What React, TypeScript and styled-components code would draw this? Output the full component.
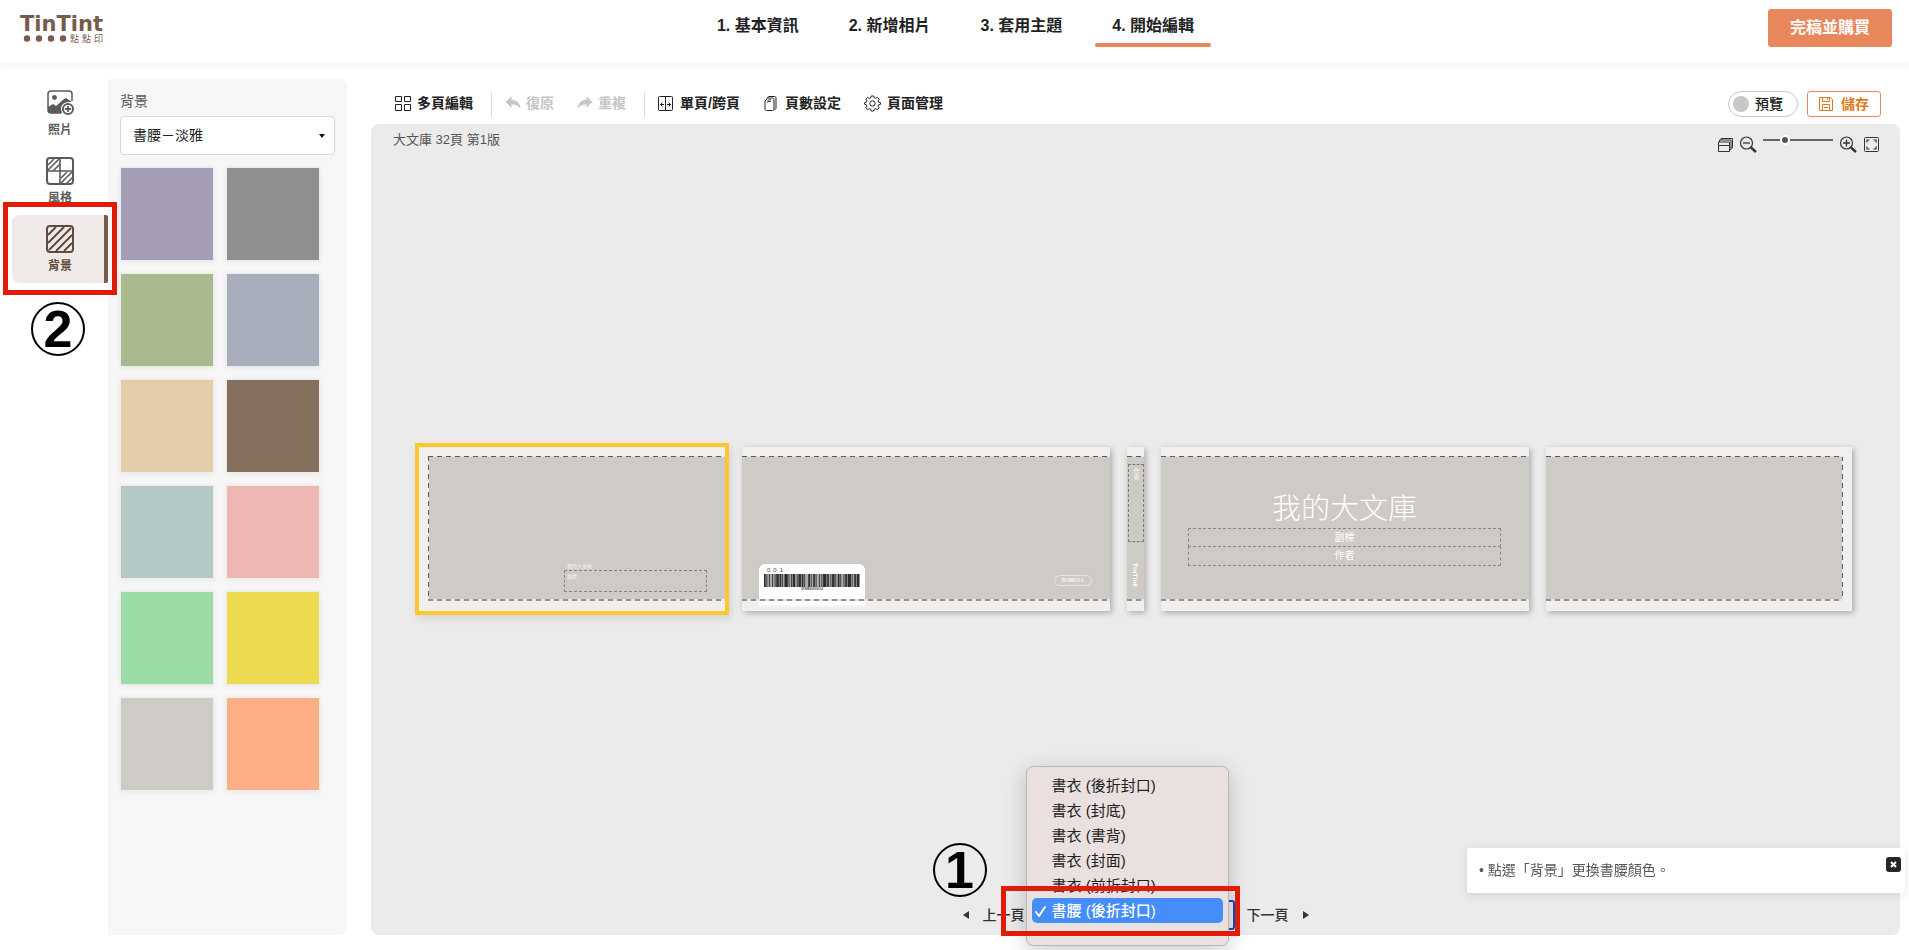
import React, { useState } from "react";
import styled, { createGlobalStyle, css } from "styled-components";

const GlobalStyle = createGlobalStyle`
  *, *::before, *::after { box-sizing: border-box; }
  body {
    margin: 0;
    background: #fff;
    color: #222;
    font-family: "Liberation Sans", "Noto Sans CJK TC", sans-serif;
    font-size: 14px;
    line-height: 20px;
  }
  button, select, input { font: inherit; color: inherit; }
  button { border: 0; padding: 0; background: none; cursor: pointer; }
`;

const Shell = styled.div`
  display: flex;
  flex-direction: column;
  min-height: 100vh;
`;

/* ---------- header ---------- */

const Header = styled.header`
  display: grid;
  grid-template-columns: 1fr auto 1fr;
  height: 63px;
  padding: 0 17px 0 19px;
  box-shadow: 0 2px 8px rgba(0, 0, 0, 0.06);
`;

const LogoLink = styled.a`
  justify-self: start;
  padding-top: 11px;
  color: #775b4d;
  svg { display: block; }
`;

const Steps = styled.nav`
  display: flex;
  gap: 16px;
`;

const Step = styled.a<{ $active?: boolean }>`
  position: relative;
  height: 47px;
  padding: 14px 17px 0;
  color: #222;
  font-size: 16px;
  font-weight: 700;
  line-height: 24px;
  text-decoration: none;
  white-space: nowrap;
  ${(p) =>
    p.$active &&
    css`
      &::after {
        content: "";
        position: absolute;
        left: 0;
        right: 0;
        bottom: 0;
        height: 4px;
        border-radius: 2px;
        background: #e8875b;
      }
    `}
`;

const BuyButton = styled.button`
  justify-self: end;
  width: 124px;
  height: 38px;
  margin-top: 9px;
  border-radius: 3px;
  background: #e8875b;
  color: #fff;
  font-size: 16px;
  font-weight: 700;
`;

/* ---------- body ---------- */

const Main = styled.main`
  display: flex;
  flex: 1;
  padding: 16px 9px 15px 0;
`;

const Rail = styled.nav`
  width: 108px;
  padding-left: 12px;
`;

const RailItem = styled.div`
  position: relative;
`;

const RailButton = styled.button<{ $active?: boolean }>`
  display: flex;
  flex-direction: column;
  align-items: center;
  gap: 5px;
  width: 100%;
  height: 68px;
  padding: 10px 4px 0;
  color: #5b5b5b;
  font-size: 12px;
  font-weight: 700;
  line-height: 16px;
  ${(p) =>
    p.$active &&
    css`
      padding-right: 0;
      border-right: 4px solid #775b4d;
      border-radius: 8px 2px 2px 8px;
      background: #efeae8;
      color: #5f4a3d;
    `}
  svg { display: block; flex: none; }
`;

const Panel = styled.section`
  width: 239px;
  padding: 12px 12px 0;
  border-radius: 0 8px 8px 0;
  background: #f7f7f7;
`;

const PanelLabel = styled.label`
  display: block;
  height: 25px;
  color: #555;
`;

const ThemeSelect = styled.div`
  position: relative;
  select {
    appearance: none;
    display: block;
    width: 100%;
    height: 39px;
    padding: 0 12px 2px;
    border: 1px solid #d8d8d8;
    border-radius: 4px;
    background: #fff;
    color: #222;
  }
  svg {
    position: absolute;
    top: 18px;
    right: 10px;
    pointer-events: none;
  }
`;

const Swatches = styled.div`
  display: grid;
  grid-template-columns: 94px 94px;
  gap: 12px;
  margin-top: 12px;
`;

const Swatch = styled.button<{ $color: string }>`
  height: 94px;
  border: 1px solid #ececec;
  background: ${(p) => p.$color};
  background-clip: padding-box;
  box-shadow: 0 1px 6px rgba(0, 0, 0, 0.07);
`;

const Workspace = styled.section`
  display: flex;
  flex: 1;
  flex-direction: column;
  min-width: 0;
  margin-left: 24px;
`;

const Toolbar = styled.div`
  display: flex;
  align-items: center;
  height: 45px;
  padding: 5px 19px 0 24px;
`;

const ToolGroup = styled.div`
  display: flex;
  align-items: center;
  gap: 23px;
  & + & {
    margin-left: 18px;
    padding-left: 13px;
    border-left: 1px solid #ddd;
  }
`;

const Tool = styled.button`
  display: flex;
  align-items: center;
  gap: 6px;
  height: 25px;
  padding-bottom: 2px;
  color: #222;
  font-weight: 700;
  white-space: nowrap;
  &:disabled {
    gap: 5px;
    color: #c6c6c6;
    cursor: default;
  }
  svg { display: block; flex: none; }
`;

const Actions = styled.div`
  display: flex;
  gap: 9px;
  margin-left: auto;
`;

const PreviewToggle = styled.label`
  display: flex;
  align-items: center;
  gap: 6px;
  width: 70px;
  height: 26px;
  padding-left: 4px;
  border: 1px solid #c8c8c8;
  border-radius: 13px;
  font-weight: 500;
  cursor: pointer;
  input {
    appearance: none;
    width: 16px;
    height: 16px;
    margin: 0;
    border-radius: 50%;
    background: #c8c8c8;
  }
  input:checked { background: #e8875b; }
`;

const SaveButton = styled.button`
  display: flex;
  align-items: center;
  justify-content: center;
  gap: 8px;
  width: 74px;
  height: 26px;
  border: 1px solid #e8875b;
  border-radius: 3px;
  color: #df7a22;
  font-weight: 700;
`;

const Canvas = styled.div`
  display: flex;
  flex: 1;
  flex-direction: column;
  border-radius: 8px;
  background: #ebebeb;
`;

const CanvasBar = styled.div`
  display: flex;
  justify-content: space-between;
  height: 34px;
  padding: 6px 21px 0 22px;
  color: #555;
  font-size: 13px;
`;

const ZoomTools = styled.div`
  display: flex;
  gap: 6px;
  padding-top: 5px;
  button { height: 18px; color: #333; }
  svg { display: block; }
`;

const ZoomSlider = styled.input`
  appearance: none;
  width: 70px;
  height: 10px;
  margin: 0;
  background: linear-gradient(#666, #666) center / 100% 2px no-repeat;
  &::-webkit-slider-thumb {
    appearance: none;
    width: 10px;
    height: 10px;
    border: 2px solid #fff;
    border-radius: 50%;
    background: #555;
  }
`;

const Stage = styled.div`
  display: flex;
  flex: 1;
  align-items: center;
  justify-content: center;
  gap: 17px;
`;

const Page = styled.article<{ $width: number; $edge?: "left" | "right"; $selected?: boolean }>`
  width: ${(p) => p.$width}px;
  height: 164px;
  padding: 9px ${(p) => (p.$edge === "right" ? 9 : 0)}px 10px ${(p) => (p.$edge === "left" ? 9 : 0)}px;
  background: #f0efed;
  box-shadow: 2px 2px 6px rgba(0, 0, 0, 0.28);
  ${(p) =>
    p.$selected &&
    css`
      outline: 4px solid #ffc72b;
      box-shadow: 2px 4px 8px 4px rgba(0, 0, 0, 0.1);
    `}
`;

const dashX = "repeating-linear-gradient(90deg, #5c5a58 0 5px, #e6e4e1 5px 9px)";
const dashY = "repeating-linear-gradient(180deg, #5c5a58 0 5px, #f4f3f2 5px 9px)";
const dashFoot = "repeating-linear-gradient(90deg, #93908d 0 5px, #e6e4e1 5px 9px)";

const Sleeve = styled.div<{ $edge?: "left" | "right" }>`
  position: relative;
  height: 100%;
  background: #cecac5;
  &::after {
    content: "";
    position: absolute;
    inset: 0;
    background:
      ${dashX} top / 100% 1px no-repeat,
      ${dashFoot} bottom / 100% 2px no-repeat
      ${(p) => p.$edge && css`, ${dashY} ${p.$edge} / 1px 100% no-repeat`};
    pointer-events: none;
  }
`;

const FlapText = styled.div`
  position: absolute;
  left: 136px;
  top: 107px;
  width: 143px;
  color: #f6f5f4;
  font-size: 5px;
  line-height: 6px;
  p { margin: 0; padding-left: 3px; }
  p + p {
    height: 22px;
    margin-top: 1px;
    padding: 2px;
    border: 1px dashed #85827f;
  }
`;

const BarcodeCard = styled.div`
  position: absolute;
  left: 17px;
  top: 108px;
  width: 106px;
  height: 42px;
  padding: 3px 5px;
  border-radius: 6px 6px 0 0;
  background: #fff;
  color: #444;
  font-size: 6px;
  line-height: 7px;
  ol {
    display: flex;
    gap: 3px;
    margin: 0;
    padding: 0 0 0 3px;
    list-style: none;
  }
  small {
    display: block;
    font-size: 3px;
    font-weight: 700;
    line-height: 4px;
    text-align: center;
  }
  svg { display: block; }
`;

const Badge = styled.div`
  position: absolute;
  left: 312px;
  top: 119px;
  width: 38px;
  height: 11px;
  border: 1px solid #e8e6e4;
  border-radius: 6px;
  color: #f6f5f4;
  font-size: 5px;
  font-weight: 700;
  line-height: 9px;
  text-align: center;
`;

const SpineBox = styled.div`
  height: 78px;
  margin-left: 1px;
  padding: 3px 4px;
  border: 1px dashed #7d7a77;
  color: #f6f5f4;
  font-size: 6px;
  line-height: 6px;
  writing-mode: vertical-rl;
`;

const Spine = styled.div`
  display: flex;
  flex-direction: column;
  gap: 21px;
  padding-top: 8px;
`;

const SpineMark = styled.span`
  align-self: center;
  color: #fff;
  font-family: "DejaVu Sans", sans-serif;
  font-size: 6px;
  font-weight: 700;
  line-height: 7px;
  writing-mode: vertical-rl;
`;

const CoverTexts = styled.div`
  padding: 30px 28px 0 27px;
  color: #fff;
  font-size: 10px;
  line-height: 17px;
  text-align: center;
  h2 {
    margin: 0 0 2px;
    font-family: "Noto Sans CJK TC", sans-serif;
    font-size: 29px;
    font-weight: 300;
    line-height: 40px;
  }
  p { margin: 0; border: 1px dashed #8a8784; }
  p + p { margin-top: -1px; height: 20px; }
`;

/* ---------- pager ---------- */

const Pager = styled.div`
  display: flex;
  align-items: flex-start;
  justify-content: center;
  height: 35px;
  gap: 3px;
`;

const PagerButton = styled.button<{ $next?: boolean }>`
  display: flex;
  flex-direction: ${(p) => (p.$next ? "row-reverse" : "row")};
  align-items: center;
  gap: 14px;
  height: 30px;
  margin-left: ${(p) => (p.$next ? 9 : 0)}px;
  color: #333;
  font-weight: 500;
`;

const PagePicker = styled.div`
  position: relative;
  width: 207px;
  select {
    display: block;
    appearance: none;
    width: 100%;
    height: 30px;
    border: 2px solid #0b50c2;
    border-radius: 3px;
    background: #ebebeb;
    color: transparent;
  }
`;

const Menu = styled.ul`
  position: absolute;
  left: -2px;
  top: -134px;
  width: 203px;
  height: 180px;
  margin: 0;
  padding: 6px 5px 0;
  border: 1px solid #b9b6b6;
  border-radius: 7px;
  background: #e9e0df;
  box-shadow: 0 6px 22px rgba(0, 0, 0, 0.2);
  list-style: none;
  svg { display: block; margin: 6px auto 0; }
`;

const MenuItem = styled.li`
  display: flex;
  align-items: center;
  height: 25px;
  padding-left: 20px;
  border-radius: 5px;
  font-size: 15px;
  white-space: nowrap;
  &[aria-selected="true"] {
    gap: 6px;
    padding-left: 3px;
    background: #448dfa;
    color: #fff;
    font-weight: 500;
  }
  &[aria-selected="true"] svg { margin: 0; }
`;

/* ---------- guide marks ---------- */

const Frame = styled.div<{ $inset: string }>`
  position: absolute;
  z-index: 2;
  inset: ${(p) => p.$inset};
  border: 5px solid #df1c08;
  pointer-events: none;
`;

const StepNumber = styled.div<{ $left: number; $top: number }>`
  position: absolute;
  z-index: 2;
  left: ${(p) => p.$left}px;
  top: ${(p) => p.$top}px;
  width: 54px;
  height: 54px;
  border: 2px solid #000;
  border-radius: 50%;
  color: #000;
  font-size: 52px;
  font-weight: 700;
  line-height: 50px;
  text-align: center;
`;

const Tip = styled.aside`
  position: fixed;
  z-index: 1;
  right: 4px;
  bottom: 57px;
  display: flex;
  justify-content: space-between;
  width: 438px;
  height: 45px;
  padding: 9px 4px 0 12px;
  border-radius: 3px;
  background: #fff;
  box-shadow: 0 2px 10px rgba(0, 0, 0, 0.1);
  color: #555;
  p { margin: 0; line-height: 26px; }
  button {
    display: flex;
    align-items: center;
    justify-content: center;
    width: 15px;
    height: 15px;
    border-radius: 3px;
    background: #262626;
    color: #fff;
  }
`;

/* ---------- icons ---------- */

const Svg = ({ w = 16, h = w, children }: { w?: number; h?: number; children: React.ReactNode }) => (
  <svg width={w} height={h} viewBox={`0 0 ${w} ${h}`} fill="none" stroke="currentColor" aria-hidden="true">
    {children}
  </svg>
);

const Logo = () => (
  <svg width="86" height="34" viewBox="0 0 86 34" fill="currentColor" role="img" aria-label="TinTint 點點印">
    <text x="1" y="20" fontFamily="DejaVu Sans, sans-serif" fontWeight="700" fontSize="21">TinTint</text>
    {[8, 20, 32, 44].map((x) => (
      <circle key={x} cx={x} cy="27.500" r="3.200" />
    ))}
    {["點", "點", "印"].map((c, i) => (
      <text key={i} x={51 + i * 12} y="31" fontFamily="Noto Sans CJK TC, sans-serif" fontSize="9">{c}</text>
    ))}
  </svg>
);

const PhotoIcon = () => (
  <Svg w={28}>
    <path d="M26 12V5a3 3 0 0 0-3-3H5a3 3 0 0 0-3 3v16a3 3 0 0 0 3 3h10" strokeWidth="1.500" />
    <circle cx="8.500" cy="8.500" r="2.400" fill="currentColor" stroke="none" />
    <path d="M2 18l5-3 3 2 8-7 2-1 6 4-3 0c-5 0-8 3-8 7l1 4H5a3 3 0 0 1-3-3z" fill="currentColor" stroke="none" />
    <circle cx="22" cy="20" r="5" strokeWidth="2" fill="#fff" />
    <path d="M22 17v6M19 20h6" strokeWidth="1.800" />
  </Svg>
);

const StyleIcon = () => (
  <Svg w={28}>
    <rect x="1" y="1" width="26" height="26" rx="3" strokeWidth="2" />
    <path d="M14 1v26M1 14h26" strokeWidth="1.600" />
    <path d="M2 8l6-6M2 13L13 2M7 14l7-7M15 21l6-6M15 26l11-11M20 27l7-7" strokeWidth="1.600" />
  </Svg>
);

const BackgroundIcon = () => (
  <Svg w={28}>
    <rect x="1" y="1" width="26" height="26" rx="3" strokeWidth="2" />
    <path d="M2 10l8-8M2 18L18 2M3 25L25 3M10 26l16-16M18 26l8-8" strokeWidth="2" />
  </Svg>
);

const GridIcon = () => (
  <Svg>
    <path d="M.5 1.500h6v5h-6zM9.500 1.500h6v5h-6zM.5 9.500h6v6h-6zM9.500 9.500h6v6h-6z" />
  </Svg>
);

const UndoIcon = ({ flip }: { flip?: boolean }) => (
  <Svg>
    <path
      d={
        flip
          ? "M15.500 7L9.500 1.500v3.300C4 5 1 8 .5 14c2-3.500 5-4.500 9-4.500v3.300z"
          : "M.5 7l6-5.500v3.300C12 5 15 8 15.500 14c-2-3.500-5-4.500-9-4.500v3.300z"
      }
      fill="currentColor"
      stroke="none"
    />
  </Svg>
);

const SpreadIcon = () => (
  <Svg>
    <rect x=".5" y="1.500" width="14" height="14" rx="1" />
    <path d="M7.500 1.500v14M2.500 9.500h3.500M9 9.500h3.500M4.500 7.500l-2 2 2 2M10.500 7.500l2 2-2 2" />
  </Svg>
);

const PagesIcon = () => (
  <Svg>
    <path d="M4.500 3C4.500 2 5 1.500 6 1.500h5.500C12.500 1.500 13 2 13 3v10c0 .8-.5 1.500-1.500 1.500" />
    <path d="M2 6l2.500-3H9.500c.8 0 1.500.6 1.500 1.500v9.500c0 .8-.6 1.500-1.500 1.500h-6C2.600 15.500 2 15 2 14z" />
    <path d="M4 7.500c1.500-1.500 2.500-.5 4-1.500M4.500 5.500C6 4.500 7 5 8 4.500" />
  </Svg>
);

const GearIcon = () => (
  <Svg w={17}>
    <circle cx="8.500" cy="8.500" r="2.700" />
    <path
      d="M7.200 1h2.600l.5 1.900 1.300.5 1.700-1 1.800 1.800-1 1.700.5 1.300 1.900.5v1.600l-1.900.5-.5 1.300 1 1.700-1.800 1.800-1.700-1-1.300.5-.5 1.900H7.200l-.5-1.900-1.300-.5-1.700 1-1.800-1.800 1-1.700-.5-1.300L.6 9.300V7.700l1.800-.5.5-1.300-1-1.700 1.800-1.800 1.700 1 1.300-.5z"
      strokeLinejoin="round"
    />
  </Svg>
);

const SaveIcon = () => (
  <Svg w={14}>
    <path d="M.5.5h11l2 2v11H.5zM3.500.5v4h7v-4M3.500 13V7.500h7V13M5 10.500h4M8.500 1v2" />
  </Svg>
);

const WindowsIcon = () => (
  <Svg w={16} h={18}>
    <path d="M1.500 7h11v9.500h-11zM1.500 10.500h11" />
    <path d="M2.500 7V5h11.500v9.500h-1.500M4 5V3.500h11.500V13h-1.500" />
  </Svg>
);

const ZoomIcon = ({ plus }: { plus?: boolean }) => (
  <Svg w={18}>
    <circle cx="7.500" cy="8" r="6" strokeWidth="1.200" />
    <path d="M12 12.500l5 4.500" strokeWidth="2.400" />
    <path d={plus ? "M4 8h7M7.500 4.500v7" : "M4 8h7"} strokeWidth="1.300" />
  </Svg>
);

const FullIcon = () => (
  <Svg w={16} h={18}>
    <rect x="1.500" y="2.500" width="14" height="14" rx="1" />
    <path d="M4 7.500V5H6.500M10.500 5H13v2.500M13 11.500V14h-2.500M6.500 14H4v-2.500" strokeWidth="1.200" />
  </Svg>
);

const Arrow = ({ next }: { next?: boolean }) => (
  <Svg w={6} h={8}>
    <path d={next ? "M0 0l6 4-6 4z" : "M6 0L0 4l6 4z"} fill="currentColor" stroke="none" />
  </Svg>
);

const bars = "2112131211312112411211321131211421122113121141221131122113112141122131";
const barTotal = bars.split("").reduce((sum, b) => sum + Number(b), 0);

const Barcode = () => {
  let x = 0;
  return (
    <svg width="96" height="13" viewBox={`0 0 ${barTotal} 13`} preserveAspectRatio="none" aria-hidden="true">
      <rect width={barTotal} height="13" fill="#aaa" />
      {bars.split("").map((b, i) => {
        const w = Number(b);
        const at = x;
        x += w;
        return i % 2 === 0 ? <rect key={i} x={at} width={w} height="13" fill="#2c2c2c" /> : null;
      })}
    </svg>
  );
};

/* ---------- data ---------- */

const steps = ["1. 基本資訊", "2. 新增相片", "3. 套用主題", "4. 開始編輯"];

const colors: [string, string][] = [
  ["紫", "#a59cb5"],
  ["深灰", "#8f8f8f"],
  ["草綠", "#abb98f"],
  ["灰藍", "#a8aebc"],
  ["米", "#e4cda9"],
  ["棕", "#85705d"],
  ["水藍", "#b4c9c6"],
  ["粉紅", "#eeb7b3"],
  ["薄荷", "#9cdba6"],
  ["黃", "#edda51"],
  ["淺灰", "#cecac5"],
  ["橘", "#fdae86"],
];

const pageNames = [
  "書衣 (後折封口)",
  "書衣 (封底)",
  "書衣 (書背)",
  "書衣 (封面)",
  "書衣 (前折封口)",
  "書腰 (後折封口)",
];

export default function App() {
  const [zoom, setZoom] = useState(28);
  const [page, setPage] = useState(pageNames[5]);
  const [tipOpen, setTipOpen] = useState(true);

  return (
    <Shell>
      <GlobalStyle />
      <Header>
        <LogoLink href="#"><Logo /></LogoLink>
        <Steps>
          {steps.map((s, i) => (
            <Step key={s} href="#" $active={i === 3}>{s}</Step>
          ))}
        </Steps>
        <BuyButton>完稿並購買</BuyButton>
      </Header>

      <Main>
        <Rail>
          <RailItem><RailButton><PhotoIcon />照片</RailButton></RailItem>
          <RailItem><RailButton><StyleIcon />風格</RailButton></RailItem>
          <RailItem>
            <RailButton $active><BackgroundIcon />背景</RailButton>
            <Frame $inset="-13px -9px -12px -9px" />
            <StepNumber $left={19} $top={87}>2</StepNumber>
          </RailItem>
        </Rail>

        <Panel>
          <PanelLabel htmlFor="theme">背景</PanelLabel>
          <ThemeSelect>
            <select id="theme"><option>書腰－淡雅</option></select>
            <svg width="6" height="4" viewBox="0 0 6 4" aria-hidden="true"><path d="M0 0h6L3 4z" fill="#111" /></svg>
          </ThemeSelect>
          <Swatches>
            {colors.map(([name, c]) => (
              <Swatch key={c} $color={c} aria-label={name} />
            ))}
          </Swatches>
        </Panel>

        <Workspace>
          <Toolbar>
            <ToolGroup>
              <Tool><GridIcon />多頁編輯</Tool>
            </ToolGroup>
            <ToolGroup>
              <Tool disabled><UndoIcon />復原</Tool>
              <Tool disabled><UndoIcon flip />重複</Tool>
            </ToolGroup>
            <ToolGroup>
              <Tool><SpreadIcon />單頁/跨頁</Tool>
              <Tool><PagesIcon />頁數設定</Tool>
              <Tool><GearIcon />頁面管理</Tool>
            </ToolGroup>
            <Actions>
              <PreviewToggle><input type="checkbox" />預覽</PreviewToggle>
              <SaveButton><SaveIcon />儲存</SaveButton>
            </Actions>
          </Toolbar>

          <Canvas>
            <CanvasBar>
              <span>大文庫 32頁 第1版</span>
              <ZoomTools>
                <button aria-label="視窗"><WindowsIcon /></button>
                <button aria-label="縮小"><ZoomIcon /></button>
                <ZoomSlider
                  type="range"
                  aria-label="縮放"
                  value={zoom}
                  onChange={(e) => setZoom(Number(e.target.value))}
                />
                <button aria-label="放大"><ZoomIcon plus /></button>
                <button aria-label="全螢幕"><FullIcon /></button>
              </ZoomTools>
            </CanvasBar>

            <Stage>
              <Page $width={306} $edge="left" $selected>
                <Sleeve $edge="left">
                  <FlapText><p>我的大文庫</p><p>副標</p></FlapText>
                </Sleeve>
              </Page>
              <Page $width={368}>
                <Sleeve>
                  <BarcodeCard>
                    <ol><li>0</li><li>0</li><li>1</li></ol>
                    <Barcode />
                    <small>9789860000014</small>
                  </BarcodeCard>
                  <Badge>BUNKO-L</Badge>
                </Sleeve>
              </Page>
              <Page $width={17}>
                <Sleeve>
                  <Spine>
                    <SpineBox>作者</SpineBox>
                    <SpineMark>TinTint</SpineMark>
                  </Spine>
                </Sleeve>
              </Page>
              <Page $width={368}>
                <Sleeve>
                  <CoverTexts>
                    <h2>我的大文庫</h2>
                    <p>副標</p>
                    <p>作者</p>
                  </CoverTexts>
                </Sleeve>
              </Page>
              <Page $width={306} $edge="right">
                <Sleeve $edge="right" />
              </Page>
            </Stage>

            <Pager>
              <PagerButton><Arrow />上一頁</PagerButton>
              <PagePicker>
                <select aria-label="頁面" value={page} onChange={(e) => setPage(e.target.value)}>
                  {pageNames.map((n) => <option key={n}>{n}</option>)}
                </select>
                <Menu role="listbox" aria-label="頁面">
                  {pageNames.map((n) => (
                    <MenuItem key={n} role="option" aria-selected={n === page} onClick={() => setPage(n)}>
                      {n === page && (
                        <Svg w={11} h={12}><path d="M1 7l3 4 6-9" strokeWidth="2" strokeLinecap="round" strokeLinejoin="round" /></Svg>
                      )}
                      {n}
                    </MenuItem>
                  ))}
                  <Svg w={10} h={8}><path d="M1 3l4 4 4-4" /></Svg>
                </Menu>
                <Frame $inset="-14px -5px -6px -27px" />
                <StepNumber $left={-95} $top={-57}>1</StepNumber>
              </PagePicker>
              <PagerButton $next><Arrow next />下一頁</PagerButton>
            </Pager>
          </Canvas>
        </Workspace>
      </Main>

      {tipOpen && (
        <Tip>
          <p>• 點選「背景」更換書腰顏色。</p>
          <button aria-label="關閉" onClick={() => setTipOpen(false)}>
            <Svg w={7}><path d="M1 1l5 5M6 1L1 6" strokeWidth="2" /></Svg>
          </button>
        </Tip>
      )}
    </Shell>
  );
}
